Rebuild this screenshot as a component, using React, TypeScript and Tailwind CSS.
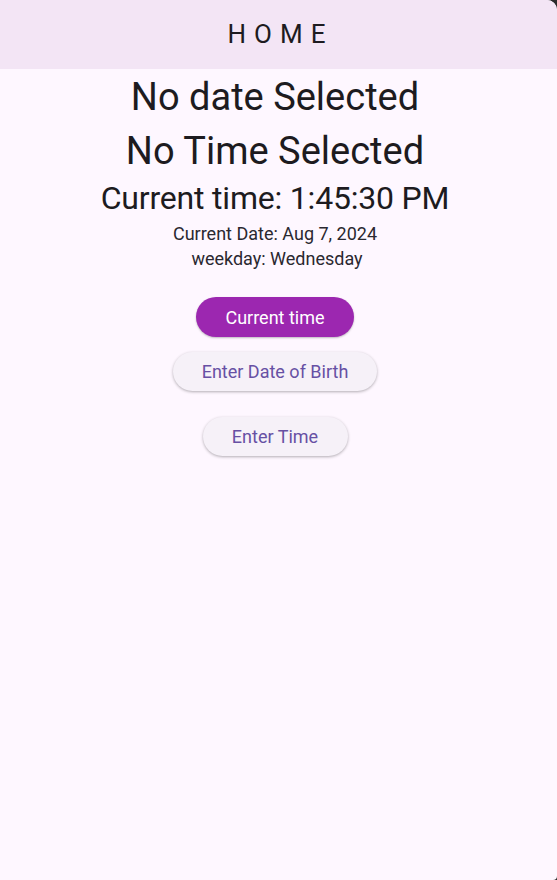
export default function App() {
  return (
    <div className="h-[880px] w-[557px] bg-[#2b2b2b]" style={{ fontFamily: 'Roboto, "Liberation Sans", sans-serif' }}>
      <div className="flex h-full flex-col overflow-hidden rounded-tr-[10px] rounded-br-[4px] bg-[#fef7ff]">
        {/* App bar */}
        <header className="flex h-[69px] shrink-0 items-center justify-center bg-[#f3e5f5] pr-[4px]">
          <h1 className="pl-[8px] text-[26px] font-normal tracking-[8px] text-[#1d1b20]">HOME</h1>
        </header>

        <main className="flex flex-col items-center pr-[7px] text-[#1d1b20]">
          <p className="mt-[4px] text-[38px] leading-[48px]">No date Selected</p>
          <p className="mt-[6px] text-[38px] leading-[48px]">No Time Selected</p>
          <p className="text-[32px] leading-[46px] tracking-[-0.2px]">Current time: 1:45:30 PM</p>
          <p className="mt-[1px] text-[18px] leading-[24px] text-[#2a2830]">Current Date: Aug 7, 2024</p>
          <p className="pl-[4px] text-[18px] leading-[26px] text-[#2a2830]">weekday: Wednesday</p>

          <button className="mt-[25px] h-[40px] w-[158px] rounded-full bg-[#9c27b0] text-[18px] text-white shadow-[0_1px_2px_rgba(0,0,0,0.25)]">
            Current time
          </button>
          <button className="mt-[15px] h-[39px] w-[204px] rounded-full bg-[#f6f1f8] text-[18px] text-[#6750a4] shadow-[0_1px_3px_rgba(0,0,0,0.3)]">
            Enter Date of Birth
          </button>
          <button className="mt-[26px] h-[39px] w-[145px] rounded-full bg-[#f6f1f8] text-[18px] text-[#6750a4] shadow-[0_1px_3px_rgba(0,0,0,0.3)]">
            Enter Time
          </button>
        </main>
      </div>
    </div>
  )
}
